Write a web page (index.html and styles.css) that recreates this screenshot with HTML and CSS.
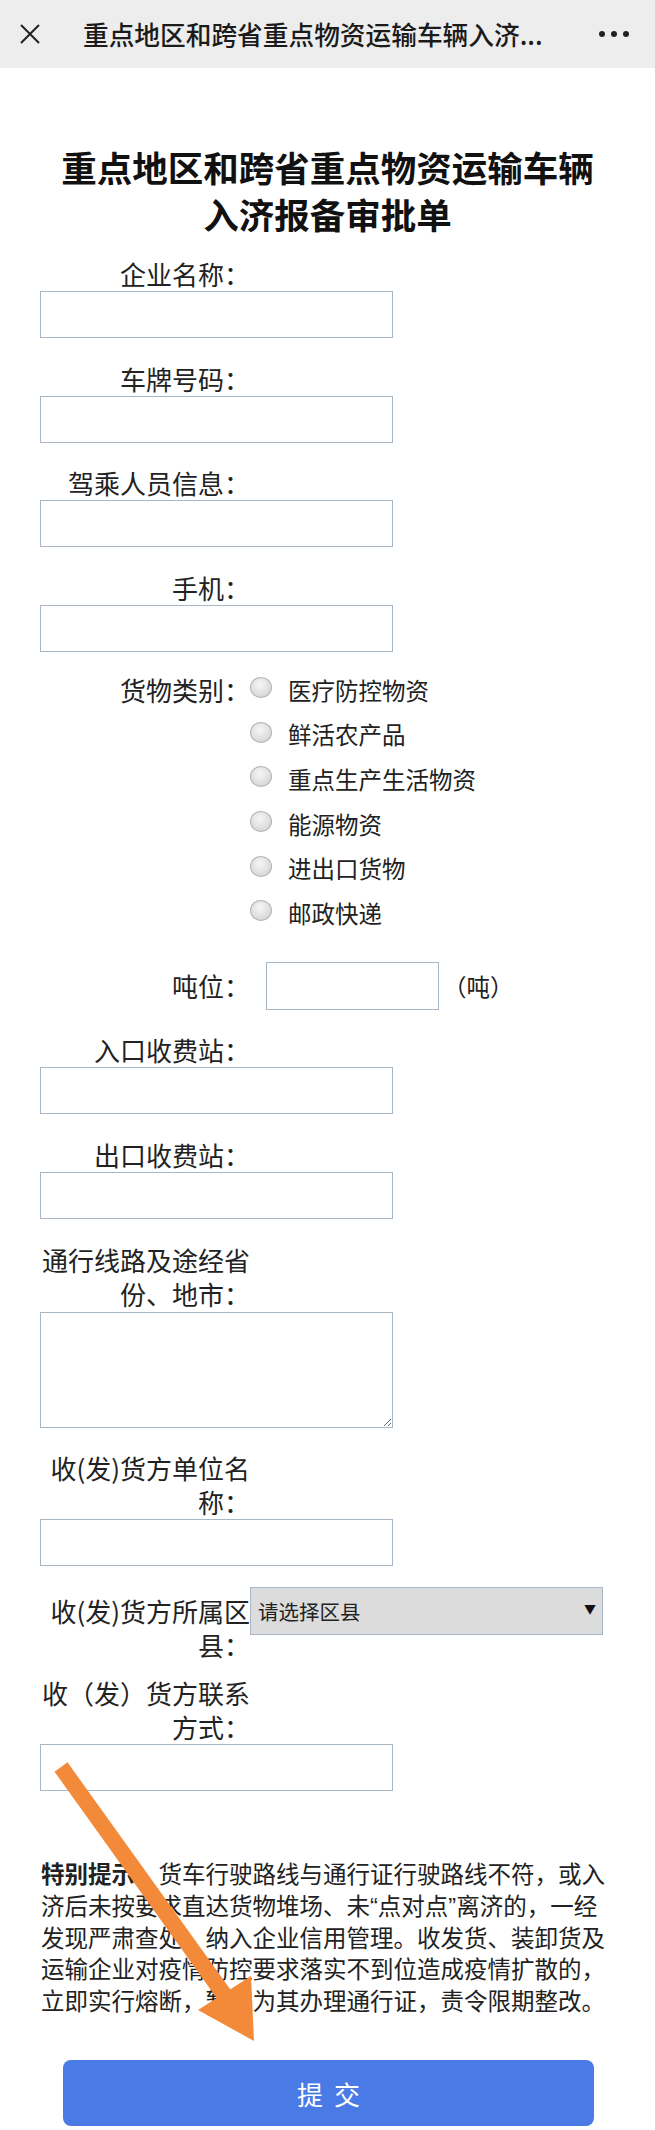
FILE: index.html
```
<!DOCTYPE html>
<html lang="zh-CN">
<head>
    <meta charset="UTF-8">
    <meta name="viewport" content="width=device-width, initial-scale=1.0">
    <title>重点地区和跨省重点物资运输车辆入济报备审批单</title>
    <link rel="stylesheet" href="styles.css">
</head>
<body>
    <!-- 顶部栏 -->
    <div class="topbar">
        <span class="topbar-close">
            <svg width="20" height="20" viewBox="0 0 20 20">
                <path d="M1 1 L19 19 M19 1 L1 19" stroke="#222" stroke-width="2" fill="none"/>
            </svg>
        </span>
        <span class="topbar-title">重点地区和跨省重点物资运输车辆入济...</span>
        <span class="topbar-more">
            <i></i><i></i><i></i>
        </span>
    </div>

    <div class="container">
        <h1>重点地区和跨省重点物资运输车辆<br>入济报备审批单</h1>

        <form id="baobeiForm">
            <div class="field">
                <label for="qymc">企业名称：</label>
                <input type="text" id="qymc" name="qymc">
            </div>

            <div class="field">
                <label for="cphm">车牌号码：</label>
                <input type="text" id="cphm" name="cphm">
            </div>

            <div class="field">
                <label for="jcry">驾乘人员信息：</label>
                <input type="text" id="jcry" name="jcry">
            </div>

            <div class="field">
                <label for="sj">手机：</label>
                <input type="text" id="sj" name="sj">
            </div>

            <!-- 货物类别 -->
            <div class="field field-row field-radio">
                <label>货物类别：</label>
                <div class="options">
                    <div class="option"><input type="radio" name="hwlb" value="1"><span>医疗防控物资</span></div>
                    <div class="option"><input type="radio" name="hwlb" value="2"><span>鲜活农产品</span></div>
                    <div class="option"><input type="radio" name="hwlb" value="3"><span>重点生产生活物资</span></div>
                    <div class="option"><input type="radio" name="hwlb" value="4"><span>能源物资</span></div>
                    <div class="option"><input type="radio" name="hwlb" value="5"><span>进出口货物</span></div>
                    <div class="option"><input type="radio" name="hwlb" value="6"><span>邮政快递</span></div>
                </div>
            </div>

            <div class="field field-row field-dunwei">
                <label for="dw">吨位：</label>
                <input type="text" id="dw" name="dw" class="input-small">
                <span class="unit">（吨）</span>
            </div>

            <div class="field">
                <label for="rksfz">入口收费站：</label>
                <input type="text" id="rksfz" name="rksfz">
            </div>

            <div class="field">
                <label for="cksfz">出口收费站：</label>
                <input type="text" id="cksfz" name="cksfz">
            </div>

            <div class="field">
                <label for="txlx">通行线路及途经省份、地市：</label>
                <textarea id="txlx" name="txlx"></textarea>
            </div>

            <div class="field">
                <label for="shdw">收(发)货方单位名称：</label>
                <input type="text" id="shdw" name="shdw">
            </div>

            <div class="field field-row field-select">
                <label for="qx">收(发)货方所属区县：</label>
                <span class="select-wrap">
                    <select id="qx" name="qx">
                        <option value="">请选择区县</option>
                    </select>
                </span>
            </div>

            <div class="field">
                <label for="lxfs">收（发）货方联系方式：</label>
                <input type="text" id="lxfs" name="lxfs">
            </div>

            <p class="tips"><b>特别提示：</b>货车行驶路线与通行证行驶路线不符，或入济后未按要求直达货物堆场、未“点对点”离济的，一经发现严肃查处，纳入企业信用管理。收发货、装卸货及运输企业对疫情防控要求落实不到位造成疫情扩散的，立即实行熔断，暂停为其办理通行证，责令限期整改。</p>

            <button type="submit">提交</button>
        </form>
    </div>

    <!-- 截图上的箭头标注 -->
    <svg class="mark-arrow" width="655" height="2130" viewBox="0 0 655 2130">
        <path d="M61 1767 L228 2000" stroke="#f28a3a" stroke-width="16" fill="none"/>
        <polygon points="254,2041 198,2010 251,1976" fill="#f28a3a"/>
    </svg>
</body>
</html>
```

FILE: styles.css
```
body {
    margin: 0;
    padding: 0;
    background-color: #fff;
    font-family: "Noto Sans CJK SC", sans-serif;
    color: #222;
    position: relative;
}

/* 顶部栏 */
.topbar {
    height: 68px;
    background-color: #ededed;
    display: flex;
    align-items: center;
}

.topbar-close {
    width: 20px;
    height: 20px;
    margin-left: 20px;
    display: flex;
}

.topbar-title {
    margin-left: 43px;
    font-size: 25.7px;
    font-weight: 500;
    color: #1b1b1b;
    white-space: nowrap;
    line-height: 34px;
}

.topbar-more {
    margin-left: auto;
    margin-right: 26px;
    display: flex;
    gap: 6px;
}

.topbar-more i {
    width: 6px;
    height: 6px;
    border-radius: 50%;
    background-color: #222;
}

.container {
    padding: 0 40px;
}

h1 {
    margin: 74.5px 0 0;
    font-size: 35.5px;
    line-height: 47px;
    font-weight: bold;
    text-align: center;
    color: #111;
}

form {
    margin-top: 20.5px;
}

.field {
    margin-bottom: 23.7px;
}

.field label {
    display: block;
    width: 208px;
    margin-left: 2px;
    font-size: 26px;
    line-height: 34px;
    text-align: right;
    color: #222;
}

input[type="text"],
textarea {
    display: block;
    box-sizing: border-box;
    width: 353px;
    height: 47px;
    margin: 0;
    border: 1px solid #a9b6c6;
    background-color: #fff;
    font-family: inherit;
    font-size: 22px;
}

textarea {
    height: 116px;
    margin-top: 1px;
}

.field-row {
    display: flex;
}

/* 货物类别 */
.field-radio {
    margin-top: -3px;
    margin-bottom: 32px;
}

.field-radio label {
    flex-shrink: 0;
}

.options {
    display: flex;
    flex-direction: column;
    gap: 10.6px;
}

.option {
    display: flex;
    align-items: center;
    height: 34px;
    font-size: 23.5px;
}

.option input[type="radio"] {
    appearance: none;
    -webkit-appearance: none;
    flex-shrink: 0;
    width: 22px;
    height: 21px;
    margin: -4px 16px 0 0;
    border: 1px solid #b4b4b4;
    border-radius: 50%;
    background: radial-gradient(circle at 45% 35%, #f6f6f6 0%, #dedede 60%, #c8c8c8 100%);
    box-sizing: border-box;
}

/* 吨位 */
.field-dunwei {
    align-items: center;
}

.field-dunwei label {
    flex-shrink: 0;
}

.input-small {
    width: 173px !important;
    height: 48px !important;
    margin-left: 16px !important;
}

.unit {
    margin-left: 4px;
    font-size: 23.5px;
}

/* 区县选择 */
.field-select {
    align-items: flex-start;
    margin-top: -2.8px;
    margin-bottom: 14px;
}

.field-select label {
    flex-shrink: 0;
    margin-top: 7px;
}

.select-wrap {
    position: relative;
    display: block;
}

.select-wrap select {
    appearance: none;
    -webkit-appearance: none;
    display: block;
    width: 353px;
    height: 48px;
    margin: 0;
    padding: 0 0 0 7px;
    border: 1px solid #a9b6c8;
    border-radius: 0;
    background-color: #dcdcdc;
    font-family: inherit;
    font-size: 20.5px;
    color: #222;
}

.select-wrap::after {
    content: "▼";
    position: absolute;
    right: 7px;
    top: 13px;
    font-size: 12px;
    color: #111;
    pointer-events: none;
}

/* 提示 */
.tips {
    width: 575px;
    margin: 67px 0 0 1px;
    font-family: "Liberation Sans", "Noto Sans CJK SC", sans-serif;
    font-size: 23.5px;
    line-height: 31.7px;
    color: #222;
}

.tips b {
    font-family: "Noto Sans CJK SC", sans-serif;
}

button {
    display: block;
    width: 531px;
    height: 66px;
    margin: 41.5px 0 0 23px;
    border: none;
    border-radius: 8px;
    background-color: #4a7ae6;
    color: #fff;
    font-family: "Noto Sans CJK SC", sans-serif;
    font-size: 26px;
    letter-spacing: 11px;
    text-indent: 11px;
    cursor: pointer;
}

.mark-arrow {
    position: absolute;
    left: 0;
    top: 0;
    pointer-events: none;
}
```
